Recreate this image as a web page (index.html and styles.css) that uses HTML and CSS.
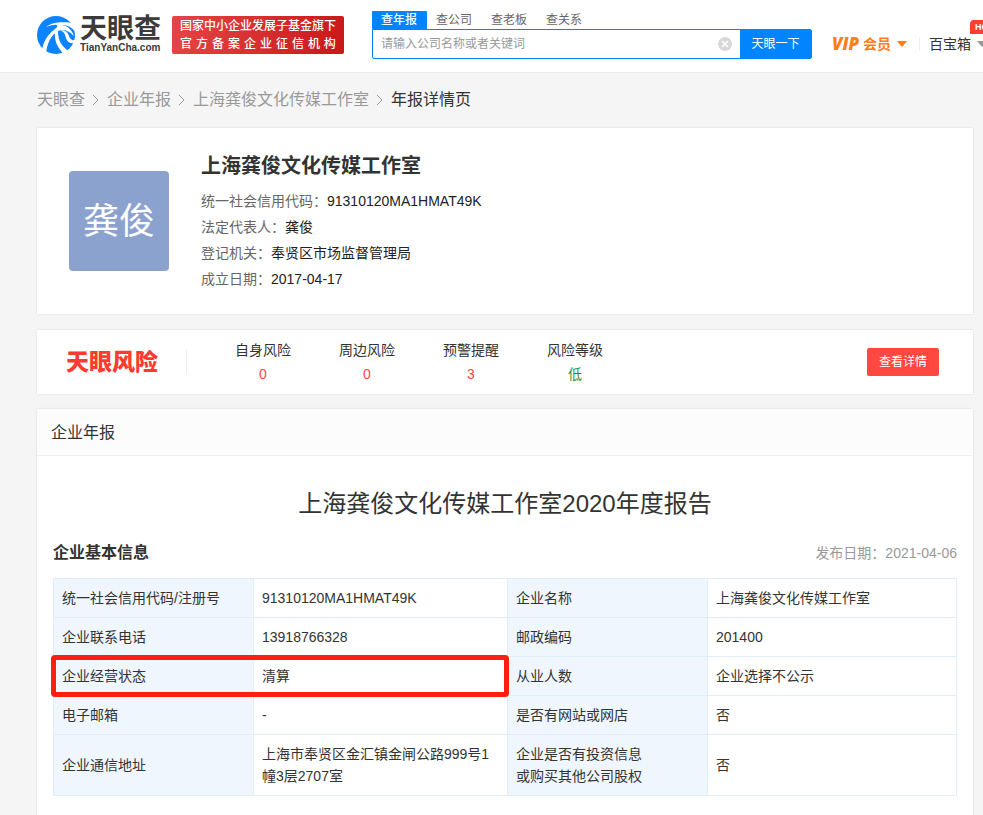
FILE: index.html
```html
<!DOCTYPE html>
<html lang="zh-CN">
<head>
<meta charset="utf-8">
<title>年报详情页 - 天眼查</title>
<link rel="stylesheet" href="styles.css">
</head>
<body>
<header class="header">
  <a class="logo" href="#">
    <svg class="logo-mark" viewBox="0 0 38 38" aria-hidden="true">
      <circle cx="19" cy="19" r="19" fill="#0d84ff"/>
      <path d="M9 11C17 5 26 6 39 7L39 17C36 12 31 9 25 9C31 10 35 14 37 20C31 14 26 13 21 15C14 19 10 27 9 38L5 35C6 26 10 19 18 13C23 9 20 7 9 11Z" fill="#fff"/>
      <path d="M18 16C17 25 21 33 28 39L32 35C25 31 21 25 21 15Z" fill="#fff"/>
      <path d="M23 14C29 14 31 17 32 20C33 23 35 25 39 24L38 27C33 28 30 26 29 22C28 18 27 16 23 14Z" fill="#fff"/>
    </svg>
    <span class="logo-words">
      <span class="logo-name">天眼查</span>
      <span class="logo-domain">TianYanCha.com</span>
    </span>
  </a>
  <div class="slogan">
    <span>国家中小企业发展子基金旗下</span>
    <span class="slogan-wide"><i>官</i><i>方</i><i>备</i><i>案</i><i>企</i><i>业</i><i>征</i><i>信</i><i>机</i><i>构</i></span>
  </div>
  <form class="search">
    <div class="tabs">
      <button type="button" class="tab tab-active">查年报</button>
      <button type="button" class="tab">查公司</button>
      <button type="button" class="tab">查老板</button>
      <button type="button" class="tab">查关系</button>
    </div>
    <div class="search-row">
      <input class="search-input" type="text" aria-label="搜索" placeholder="请输入公司名称或者关键词">
      <button type="button" class="clear" aria-label="清空">
        <svg viewBox="0 0 14 14"><circle cx="7" cy="7" r="7" fill="#d8d8d8"/><path d="M4 4l6 6M10 4l-6 6" stroke="#fff" stroke-width="1.5"/></svg>
      </button>
      <button type="button" class="search-button">天眼一下</button>
    </div>
  </form>
  <nav class="nav">
    <a class="vip" href="#"><span class="vip-latin">VIP</span><span>会员</span><span class="caret"></span></a>
    <a class="toolbox" href="#">百宝箱<span class="caret caret-grey"></span><span class="hot">HOT</span></a>
  </nav>
</header>

<main class="page">
  <nav class="crumbs">
    <a href="#">天眼查</a>
    <svg viewBox="0 0 6 10"><path d="M0 0l5 5-5 5"/></svg>
    <a href="#">企业年报</a>
    <svg viewBox="0 0 6 10"><path d="M0 0l5 5-5 5"/></svg>
    <a href="#">上海龚俊文化传媒工作室</a>
    <svg viewBox="0 0 6 10"><path d="M0 0l5 5-5 5"/></svg>
    <span class="crumb-current">年报详情页</span>
  </nav>

  <section class="card company">
    <div class="avatar">龚俊</div>
    <div>
      <h2 class="company-name">上海龚俊文化传媒工作室</h2>
      <p class="fact">统一社会信用代码：<span>91310120MA1HMAT49K</span></p>
      <p class="fact">法定代表人：<span>龚俊</span></p>
      <p class="fact">登记机关：<span>奉贤区市场监督管理局</span></p>
      <p class="fact">成立日期：<span>2017-04-17</span></p>
    </div>
  </section>

  <section class="card risk">
    <div class="risk-logo">天眼风险</div>
    <div class="risk-items">
      <div class="risk-item">自身风险<span class="red">0</span></div>
      <div class="risk-item">周边风险<span class="red">0</span></div>
      <div class="risk-item">预警提醒<span class="red">3</span></div>
      <div class="risk-item">风险等级<span class="green">低</span></div>
    </div>
    <button type="button" class="risk-button">查看详情</button>
  </section>

  <section class="card report">
    <div class="report-head">企业年报</div>
    <div class="report-body">
      <h1 class="report-title">上海龚俊文化传媒工作室2020年度报告</h1>
      <div class="section-head">
        <h3>企业基本信息</h3>
        <span class="date">发布日期：2021-04-06</span>
      </div>
      <table class="info">
        <colgroup><col class="col-label"><col class="col-value"><col class="col-label"><col></colgroup>
        <tbody>
          <tr><th scope="row">统一社会信用代码/注册号</th><td>91310120MA1HMAT49K</td><th scope="row">企业名称</th><td>上海龚俊文化传媒工作室</td></tr>
          <tr><th scope="row">企业联系电话</th><td>13918766328</td><th scope="row">邮政编码</th><td>201400</td></tr>
          <tr class="marked"><th scope="row">企业经营状态<span class="marker"></span></th><td>清算</td><th scope="row">从业人数</th><td>企业选择不公示</td></tr>
          <tr><th scope="row">电子邮箱</th><td>-</td><th scope="row">是否有网站或网店</th><td>否</td></tr>
          <tr><th scope="row">企业通信地址</th><td>上海市奉贤区金汇镇金闸公路999号1幢3层2707室</td><th scope="row">企业是否有投资信息<br>或购买其他公司股权</th><td>否</td></tr>
        </tbody>
      </table>
    </div>
  </section>
</main>
</body>
</html>
```
FILE: styles.css
```css
* { box-sizing: border-box; }
body {
  margin: 0;
  min-height: 100vh;
  display: flex;
  flex-direction: column;
  overflow-x: hidden;
  background: #f5f5f5;
  color: #333;
  font: 14px/22px "Liberation Sans", "Noto Sans CJK SC", sans-serif;
}
h1, h2, h3, p { margin: 0; }
a { color: inherit; text-decoration: none; }
button { border: 0; padding: 0; background: none; font: inherit; color: inherit; }

/* Header */
.header {
  display: flex;
  align-items: flex-start;
  height: 73px;
  padding-left: 37px;
  overflow: hidden;
  background: #fff;
  border-bottom: 1px solid #ebebeb;
  white-space: nowrap;
}
.header > * { flex: none; }
.logo { display: flex; gap: 5px; width: 123px; margin: 16px 12px 0 0; color: #3e3a39; }
.logo-mark { flex: none; width: 38px; height: 38px; }
.logo-words { display: flex; flex-direction: column; }
.logo-name { font-size: 27px; line-height: 26px; font-weight: 700; }
.logo-domain { font-size: 10px; line-height: 12px; font-weight: 700; }
.slogan {
  width: 172px;
  height: 38px;
  margin-top: 16px;
  padding: 1px 8px;
  border-radius: 2px;
  background: linear-gradient(100deg, #e64545, #c91818);
  color: #fff;
  font-size: 12px;
  line-height: 18px;
  font-weight: 500;
}
.slogan span { display: flex; justify-content: space-between; }
.slogan i { font-style: normal; }
.search { width: 440px; margin: 11px 0 0 28px; font-size: 12px; }
.tabs { display: flex; }
.tab { height: 18px; padding: 0 10px 0 9px; line-height: 18px; color: #666; }
.tab-active { background: #0084ff; color: #fff; font-weight: 500; border-radius: 1px 1px 0 0; }
.search-row { display: flex; height: 30px; border: 1px solid #0084ff; border-radius: 0 2px 2px 2px; align-items: center; }
.search-input { flex: 1; min-width: 0; padding: 0 8px; border: 0; outline: 0; background: none; font: inherit; }
.search-input::placeholder { color: #999; }
.clear { width: 14px; height: 14px; margin-right: 8px; }
.clear svg { display: block; }
.search-button { width: 71px; height: 28px; background: #0084ff; color: #fff; }
.nav { display: flex; margin: 33px 0 0 20px; }
.vip { display: flex; align-items: center; width: 87px; color: #ff7d18; font-weight: 700; }
.vip-latin { width: 31px; font-family: "Open Sans", sans-serif; font-size: 17px; font-style: italic; font-weight: 800; }
.caret { border: 5px solid transparent; border-top: 6px solid #ff7d18; border-bottom: 0; margin-left: 6px; }
.caret-grey { border-top-color: #999; }
.toolbox { position: relative; display: flex; align-items: center; padding-left: 10px; }
.toolbox::before { content: ""; position: absolute; left: 0; top: 4px; height: 14px; border-left: 1px solid #eee; }
.hot {
  position: absolute;
  left: 51px;
  top: -13px;
  padding: 0 5px;
  border-radius: 4px 4px 4px 0;
  background: #ff3d33;
  color: #fff;
  font-size: 9px;
  line-height: 14px;
  font-weight: 700;
}

/* Page */
.page { flex: 1; display: flex; flex-direction: column; padding: 0 10px 0 37px; }
.crumbs { display: flex; align-items: center; gap: 8px; height: 55px; padding-bottom: 2px; font-size: 16px; color: #999; }
.crumbs svg { width: 6px; height: 10px; fill: none; stroke: #999; overflow: visible; }
.crumb-current { color: #333; }
.card { background: #fff; box-shadow: 0 0 2px rgba(0, 0, 0, .12); }
.company { display: flex; align-items: center; gap: 32px; padding: 22px 32px; }
.avatar {
  width: 100px;
  height: 100px;
  border-radius: 4px;
  background: #8ba2cf;
  color: #fff;
  font-size: 36px;
  line-height: 102px;
  text-align: center;
}
.company-name { margin-bottom: 6px; font-size: 20px; line-height: 32px; font-weight: 700; }
.fact { line-height: 26px; color: #666; }
.fact span { color: #222; }

.risk { display: flex; align-items: center; margin: 16px 0 15px; height: 64px; padding: 0 34px 0 29px; }
.risk-logo { width: 121px; border-right: 1px solid #eee; color: #ff3b2f; font-size: 23px; line-height: 24px; font-weight: 900; }
.risk-items { flex: 1; display: flex; padding-left: 24px; }
.risk-item { width: 104px; text-align: center; line-height: 24px; }
.risk-item span { display: block; }
.red { color: #ff4840; }
.green { color: #1e8f4a; }
.risk-button { width: 72px; height: 28px; border-radius: 2px; background: #ff4840; color: #fff; font-size: 12px; }

.report { flex: 1; }
.report-head { height: 47px; padding: 0 14px; border-bottom: 1px solid #f0f0f0; background: #fcfcfc; font-size: 16px; line-height: 48px; }
.report-body { padding: 30px 16px 18px; }
.report-title { font-size: 24px; line-height: 36px; font-weight: 400; text-align: center; }
.section-head { display: flex; justify-content: space-between; align-items: center; margin: 20px 0 14px; }
.section-head h3 { font-size: 16px; line-height: 22px; }
.date { color: #999; }
.info { width: 100%; table-layout: fixed; border-collapse: collapse; }
.col-label { width: 200px; }
.col-value { width: 254px; }
.info th, .info td { padding: 8px; border: 1px solid #e1edf7; text-align: left; font-weight: 400; }
.info th { background: #eff6fd; }
.marked { position: relative; }
.marker {
  position: absolute;
  left: -3px;
  top: -2px;
  bottom: -1px;
  width: 458px;
  border: 5px solid #ff1e12;
  border-radius: 4px;
}
```
